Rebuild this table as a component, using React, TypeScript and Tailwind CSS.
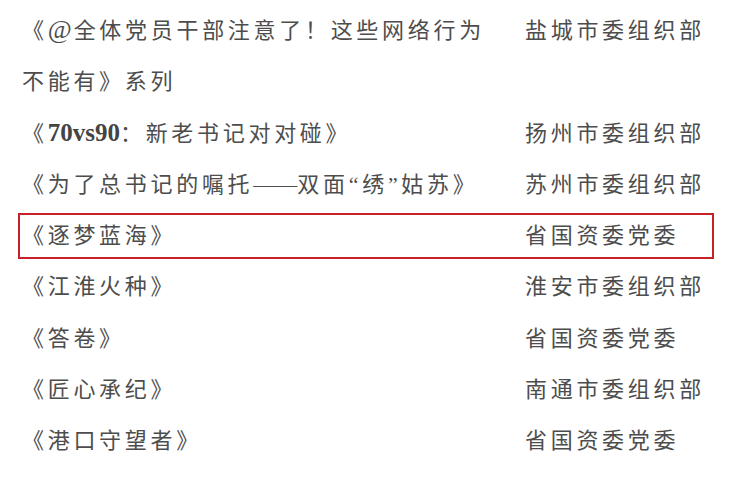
const rows: { title: React.ReactNode; org: string; mark?: boolean; tall?: boolean }[] = [
  {
    title: (
      <>
        《<span className="text-[26px] leading-none tracking-[2px]">@</span>全体党员干部注意了！这些网络行为
        <br />
        不能有》系列
      </>
    ),
    org: '盐城市委组织部',
    tall: true,
  },
  {
    title: (
      <>
        《<span className="text-[25px] leading-none font-bold tracking-normal text-[#444]">70vs90</span>：新老书记对对碰》
      </>
    ),
    org: '扬州市委组织部',
  },
  {
    title: (
      <>
        《为了总书记的嘱托<span className="tracking-normal">——</span>双面“绣”姑苏》
      </>
    ),
    org: '苏州市委组织部',
  },
  { title: '《逐梦蓝海》', org: '省国资委党委', mark: true },
  { title: '《江淮火种》', org: '淮安市委组织部' },
  { title: '《答卷》', org: '省国资委党委' },
  { title: '《匠心承纪》', org: '南通市委组织部' },
  { title: '《港口守望者》', org: '省国资委党委' },
];

export default function App() {
  return (
    <div
      className="w-[756px] h-[479px] bg-white pt-[5px] pl-[22px] text-[22px] leading-[51.3px] tracking-[3.7px] text-[#4d4d4d] overflow-hidden"
      style={{ fontFamily: '"Liberation Serif", "Noto Sans CJK SC", serif' }}
    >
      {rows.map((r, i) =>
        r.mark ? (
          <div key={i} className="h-[51.3px] flex items-center">
            <div className="-ml-[4px] w-[696px] h-[46px] pl-[2px] border-2 border-[#c8202a] flex items-center">
              <div className="w-[503px]">{r.title}</div>
              <div>{r.org}</div>
            </div>
          </div>
        ) : (
          <div key={i} className={`flex items-start overflow-hidden ${r.tall ? 'h-[102.6px]' : 'h-[51.3px]'}`}>
            <div className="w-[503px]">{r.title}</div>
            <div>{r.org}</div>
          </div>
        )
      )}
    </div>
  );
}
